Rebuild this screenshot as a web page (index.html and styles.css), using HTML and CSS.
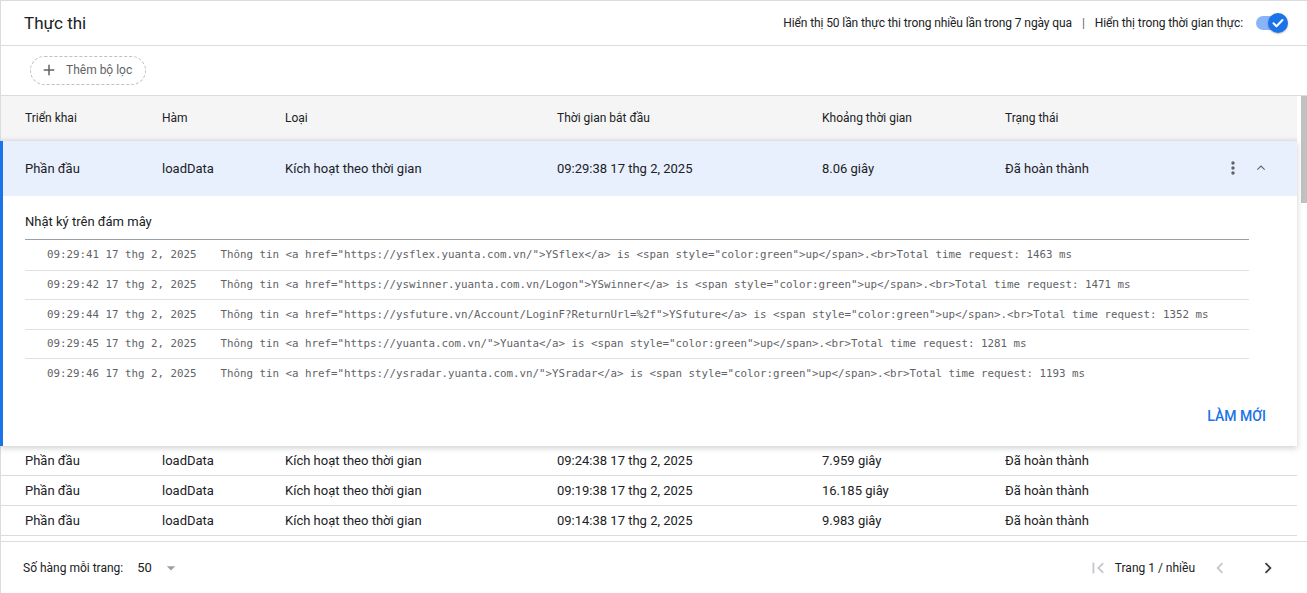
FILE: index.html
```html
<!DOCTYPE html>
<html lang="vi">
<head>
<meta charset="utf-8">
<title>Thực thi</title>
<link rel="stylesheet" href="styles.css">
</head>
<body>
<div class="page">
  <header class="topbar">
    <h1 class="title">Thực thi</h1>
    <div class="top-right">
      <span>Hiển thị 50 lần thực thi trong nhiều lần trong 7 ngày qua</span>
      <span class="sep">|</span>
      <span>Hiển thị trong thời gian thực:</span>
      <span class="toggle">
        <span class="toggle-track"></span>
        <span class="toggle-knob">
          <svg viewBox="0 0 20 20" width="20" height="20"><path d="M5.5 10.3l3 3 6-6.3" fill="none" stroke="#fff" stroke-width="2" stroke-linecap="round" stroke-linejoin="round"/></svg>
        </span>
      </span>
    </div>
  </header>

  <div class="filterbar">
    <button class="chip">
      <svg viewBox="0 0 24 24" width="18" height="18"><path d="M19 13h-6v6h-2v-6H5v-2h6V5h2v6h6v2z" fill="#5f6368"/></svg>
      <span>Thêm bộ lọc</span>
    </button>
  </div>

  <div class="table-area">
    <div class="table">
      <div class="grid-row thead">
        <span>Triển khai</span>
        <span>Hàm</span>
        <span>Loại</span>
        <span>Thời gian bắt đầu</span>
        <span>Khoảng thời gian</span>
        <span>Trạng thái</span>
        <span></span>
        <span></span>
      </div>

      <div class="expanded">
        <div class="grid-row selected">
          <span>Phần đầu</span>
          <span>loadData</span>
          <span>Kích hoạt theo thời gian</span>
          <span>09:29:38 17 thg 2, 2025</span>
          <span>8.06 giây</span>
          <span>Đã hoàn thành</span>
          <span class="icon-cell"><svg viewBox="0 0 24 24" width="20" height="20"><path d="M12 8c1.1 0 2-.9 2-2s-.9-2-2-2-2 .9-2 2 .9 2 2 2zm0 2c-1.1 0-2 .9-2 2s.9 2 2 2 2-.9 2-2-.9-2-2-2zm0 6c-1.1 0-2 .9-2 2s.9 2 2 2 2-.9 2-2-.9-2-2-2z" fill="#5f6368"/></svg></span>
          <span class="icon-cell"><svg viewBox="0 0 24 24" width="16" height="16"><path d="M6.5 14.5l5.5-5.5 5.5 5.5" fill="none" stroke="#5f6368" stroke-width="1.6"/></svg></span>
        </div>
        <div class="detail">
          <div class="detail-title">Nhật ký trên đám mây</div>
          <div class="logs">
            <div class="log-row"><span class="log-time">09:29:41 17 thg 2, 2025</span><span class="log-msg">Thông tin &lt;a href="https://ysflex.yuanta.com.vn/"&gt;YSflex&lt;/a&gt; is &lt;span style="color:green"&gt;up&lt;/span&gt;.&lt;br&gt;Total time request: 1463 ms</span></div>
            <div class="log-row"><span class="log-time">09:29:42 17 thg 2, 2025</span><span class="log-msg">Thông tin &lt;a href="https://yswinner.yuanta.com.vn/Logon"&gt;YSwinner&lt;/a&gt; is &lt;span style="color:green"&gt;up&lt;/span&gt;.&lt;br&gt;Total time request: 1471 ms</span></div>
            <div class="log-row"><span class="log-time">09:29:44 17 thg 2, 2025</span><span class="log-msg">Thông tin &lt;a href="https://ysfuture.vn/Account/LoginF?ReturnUrl=%2f"&gt;YSfuture&lt;/a&gt; is &lt;span style="color:green"&gt;up&lt;/span&gt;.&lt;br&gt;Total time request: 1352 ms</span></div>
            <div class="log-row"><span class="log-time">09:29:45 17 thg 2, 2025</span><span class="log-msg">Thông tin &lt;a href="https://yuanta.com.vn/"&gt;Yuanta&lt;/a&gt; is &lt;span style="color:green"&gt;up&lt;/span&gt;.&lt;br&gt;Total time request: 1281 ms</span></div>
            <div class="log-row"><span class="log-time">09:29:46 17 thg 2, 2025</span><span class="log-msg">Thông tin &lt;a href="https://ysradar.yuanta.com.vn/"&gt;YSradar&lt;/a&gt; is &lt;span style="color:green"&gt;up&lt;/span&gt;.&lt;br&gt;Total time request: 1193 ms</span></div>
          </div>
          <div class="detail-actions">
            <button class="text-btn">LÀM MỚI</button>
          </div>
        </div>
      </div>

      <div class="grid-row body-row">
        <span>Phần đầu</span><span>loadData</span><span>Kích hoạt theo thời gian</span><span>09:24:38 17 thg 2, 2025</span><span>7.959 giây</span><span>Đã hoàn thành</span><span></span><span></span>
      </div>
      <div class="grid-row body-row">
        <span>Phần đầu</span><span>loadData</span><span>Kích hoạt theo thời gian</span><span>09:19:38 17 thg 2, 2025</span><span>16.185 giây</span><span>Đã hoàn thành</span><span></span><span></span>
      </div>
      <div class="grid-row body-row">
        <span>Phần đầu</span><span>loadData</span><span>Kích hoạt theo thời gian</span><span>09:14:38 17 thg 2, 2025</span><span>9.983 giây</span><span>Đã hoàn thành</span><span></span><span></span>
      </div>
    </div>
    <div class="scrollbar"><div class="scroll-thumb"></div></div>
  </div>

  <footer class="footer">
    <div class="rows-per-page">
      <span class="rpp-label">Số hàng mỗi trang:</span>
      <span class="rpp-value">50</span>
      <svg viewBox="0 0 24 24" width="20" height="20"><path d="M7 10l5 5 5-5z" fill="#9aa0a6"/></svg>
    </div>
    <div class="pager">
      <svg class="pg-icon" viewBox="0 0 24 24" width="22" height="22"><path d="M18.41 16.59L13.82 12l4.59-4.59L17 6l-6 6 6 6zM6 6h2v12H6z" fill="#c4c7cb"/></svg>
      <span class="pg-label">Trang 1 / nhiều</span>
      <svg class="pg-icon" viewBox="0 0 24 24" width="22" height="22"><path d="M15.41 7.41L14 6l-6 6 6 6 1.41-1.41L10.83 12z" fill="#c4c7cb"/></svg>
      <svg class="pg-icon" viewBox="0 0 24 24" width="22" height="22"><path d="M10 6L8.59 7.41 13.17 12l-4.58 4.59L10 18l6-6z" fill="#3c4043"/></svg>
    </div>
  </footer>
</div>
</body>
</html>
```

FILE: styles.css
```css
* { box-sizing: border-box; }

html, body {
  margin: 0;
  padding: 0;
  background: #fff;
}

body {
  font-family: Roboto, "Noto Sans", Arial, sans-serif;
  color: #202124;
  width: 1307px;
  height: 593px;
  overflow: hidden;
}

.page {
  height: 593px;
  border-top: 1px solid #dadce0;
  border-left: 1px solid #dadce0;
  display: flex;
  flex-direction: column;
}

/* top bar */
.topbar {
  height: 45px;
  flex: none;
  border-bottom: 1px solid #dadce0;
  display: flex;
  align-items: center;
  justify-content: space-between;
  padding: 0 19px 0 23px;
}

.title {
  margin: 0;
  font-size: 17px;
  font-weight: 400;
  color: #202124;
}

.top-right {
  display: flex;
  align-items: center;
  font-size: 12px;
  letter-spacing: -0.1px;
  color: #202124;
}

.sep {
  margin: 0 10px;
  color: #5f6368;
}

.toggle {
  position: relative;
  display: inline-block;
  width: 32px;
  height: 22px;
  margin-left: 13px;
}

.toggle-track {
  position: absolute;
  left: 0;
  top: 4px;
  width: 30px;
  height: 14px;
  border-radius: 7px;
  background: #8ab4f8;
}

.toggle-knob {
  position: absolute;
  left: 12px;
  top: 1px;
  width: 20px;
  height: 20px;
  border-radius: 50%;
  background: #1a73e8;
  box-shadow: 0 1px 2px rgba(0,0,0,0.25);
  display: flex;
}

/* filter */
.filterbar {
  height: 49px;
  flex: none;
  display: flex;
  align-items: center;
  padding-left: 29px;
  padding-bottom: 1px;
}

.chip {
  height: 29px;
  display: flex;
  align-items: center;
  gap: 8px;
  padding: 0 13px 0 9px;
  border: 1px dashed #bdc1c6;
  border-radius: 15px;
  background: #fff;
  font-family: Roboto, "Noto Sans", Arial, sans-serif;
  font-size: 12px;
  color: #5f6368;
  cursor: pointer;
}

/* table */
.table-area {
  flex: none;
  height: 446px;
  border-top: 1px solid #dadce0;
  display: flex;
}

.table {
  width: 1296px;
  flex: none;
}

.scrollbar {
  flex: 1;
  padding: 0 0 0 4px;
}

.scroll-thumb {
  width: 6px;
  height: 107px;
  background: #c1c1c1;
}

.grid-row {
  display: grid;
  grid-template-columns: 137px 123px 272px 265px 183px 1fr 28px 28px;
  align-items: center;
  padding: 0 22px 0 24px;
}

.thead {
  height: 45px;
  padding-bottom: 1px;
  background: #f5f5f5;
  font-size: 12px;
  color: #202124;
  box-shadow: inset 0 -4px 4px -3px rgba(0,0,0,0.08);
}

.expanded {
  position: relative;
  border-left: 3px solid #1a73e8;
  margin-left: -1px;
  box-shadow: 0 2px 6px rgba(60,64,67,0.25);
  z-index: 1;
  background: #fff;
}

.selected {
  height: 55px;
  padding-bottom: 1px;
  background: #e8f0fe;
  font-size: 13px;
  padding-left: 22px;
}

.icon-cell {
  display: flex;
  justify-content: center;
  align-items: center;
}

.detail {
  padding: 16px 31px 12px 22px;
  height: 250px;
}

.detail-title {
  font-size: 13px;
  color: #202124;
  line-height: 20px;
  margin-bottom: 7px;
}

.logs {
  border-top: 1px solid #9aa0a6;
  margin-right: 17px;
}

.log-row {
  height: 29.5px;
  display: flex;
  align-items: center;
  padding-left: 22px;
  font-family: "DejaVu Sans Mono", "Liberation Mono", monospace;
  font-size: 10.8px;
  color: #5f6368;
  white-space: pre;
}

.log-row + .log-row {
  border-top: 1px solid #e0e0e0;
}

.log-time {
  margin-right: 24px;
}

.detail-actions {
  display: flex;
  justify-content: flex-end;
  margin-top: 10px;
}

.text-btn {
  height: 36px;
  border: none;
  background: none;
  padding: 0 8px;
  margin-right: -8px;
  font-family: Roboto, "Noto Sans", Arial, sans-serif;
  font-size: 14px;
  font-weight: 500;
  color: #1a73e8;
  cursor: pointer;
}

.body-row {
  height: 30px;
  border-bottom: 1px solid #dadce0;
  font-size: 13px;
  color: #202124;
}

/* footer */
.footer {
  flex: 1;
  border-top: 1px solid #dadce0;
  display: flex;
  align-items: center;
  justify-content: space-between;
  padding: 0 28px 0 22px;
}

.rows-per-page {
  display: flex;
  align-items: center;
  font-size: 12px;
  color: #202124;
}

.rpp-value {
  font-size: 13px;
  margin-left: 14px;
  margin-right: 9px;
}

.pager {
  display: flex;
  align-items: center;
  font-size: 12px;
  color: #202124;
}

.pg-label {
  margin: 0 14px 0 6px;
}

.pg-icon + .pg-icon {
  margin-left: 26px;
}
```
